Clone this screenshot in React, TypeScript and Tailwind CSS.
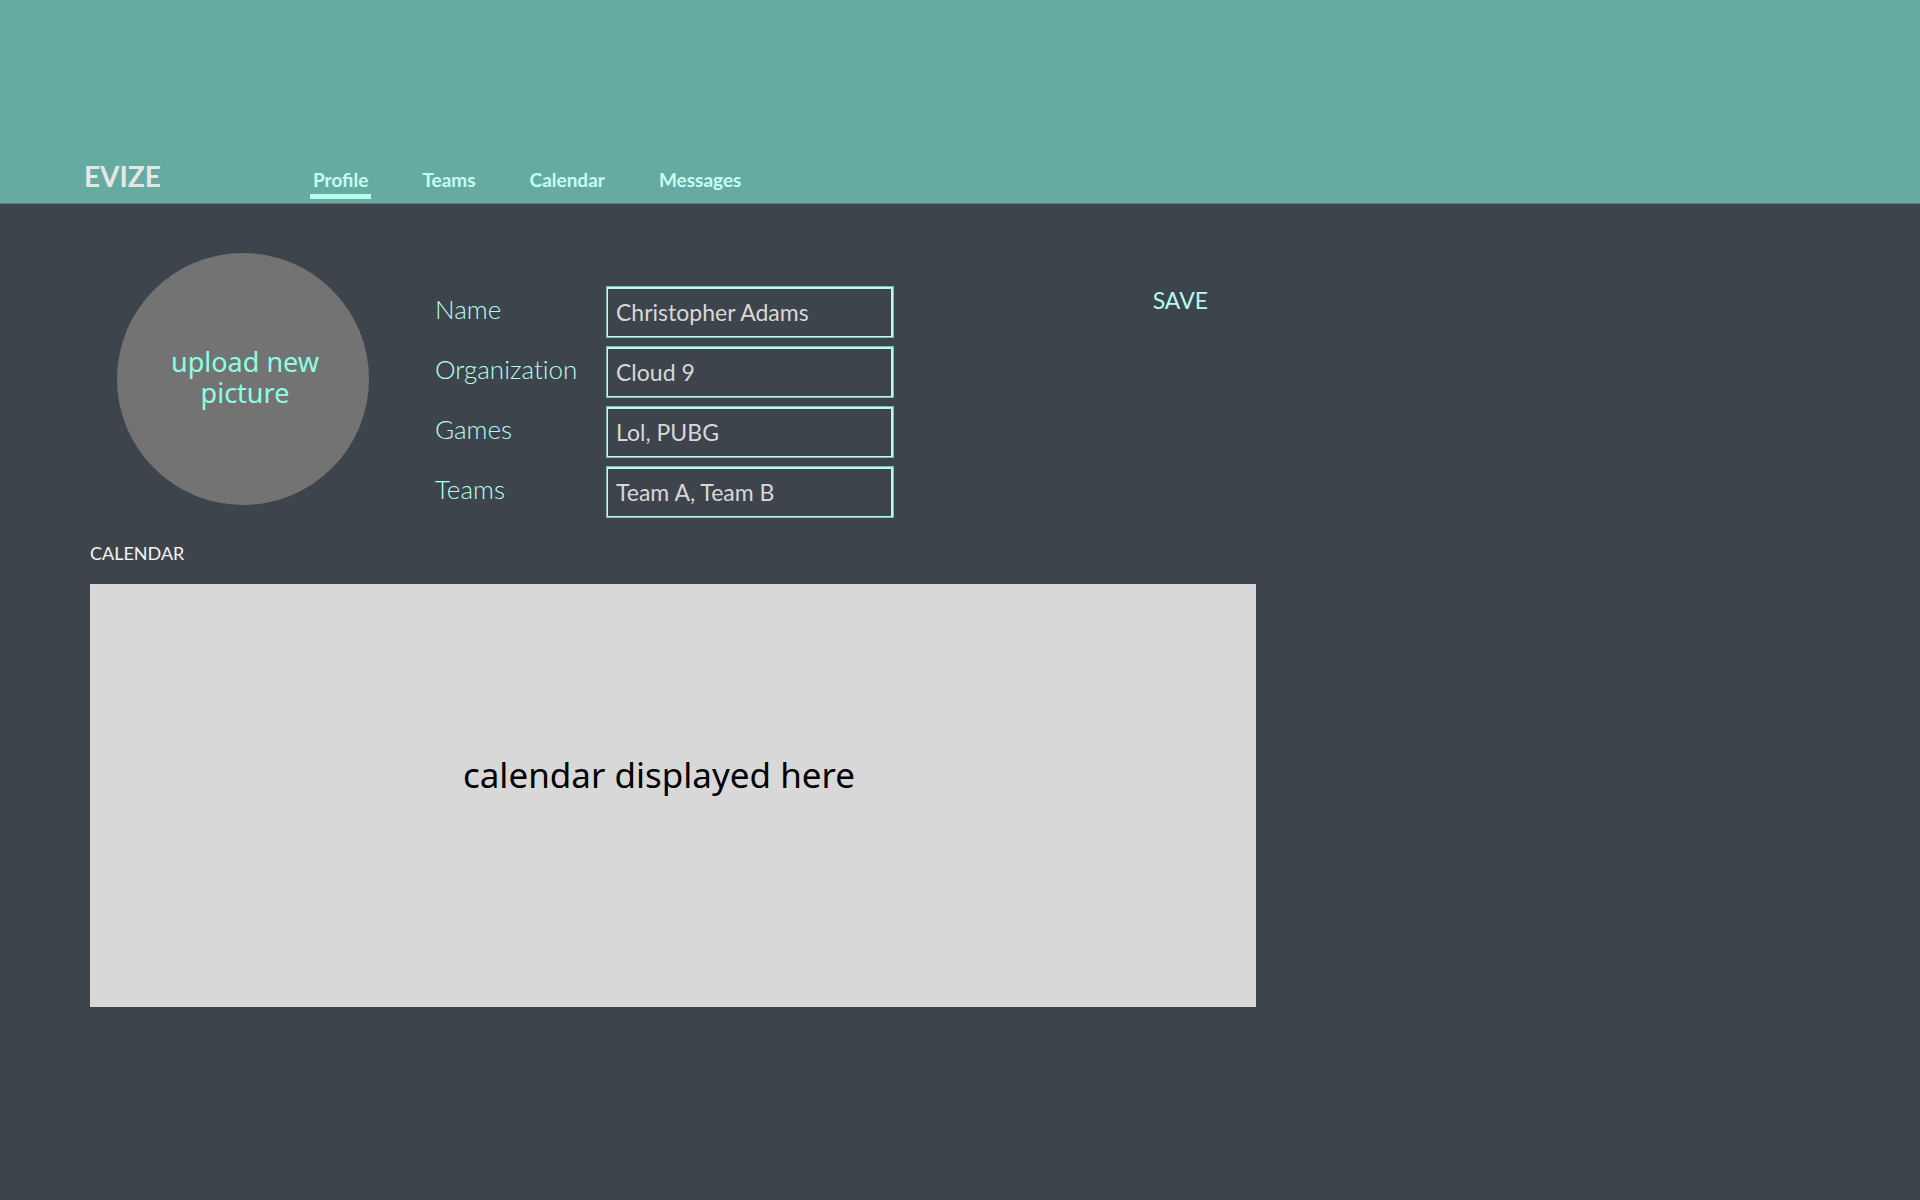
const tabs = ["Profile", "Teams", "Calendar", "Messages"];

const fields = [
  { id: "name", label: "Name", value: "Christopher Adams" },
  { id: "organization", label: "Organization", value: "Cloud 9" },
  { id: "games", label: "Games", value: "Lol, PUBG" },
  { id: "teams", label: "Teams", value: "Team A, Team B" },
];

function Header() {
  return (
    <header className="flex h-[204px] items-end border-b border-[#548079] bg-[#66aba1] pl-[84px]">
      <a href="#home" className="mb-[9px] w-[226px] text-[28px] leading-9 font-bold text-[#e6e6e6]">
        EVIZE
      </a>
      <nav className="flex gap-12">
        {tabs.map((tab, i) => (
          <a
            key={tab}
            href={"#" + tab.toLowerCase()}
            aria-current={i === 0 ? "page" : undefined}
            className="mb-1 border-b-[5px] border-transparent px-[3px] pb-0.5 text-[19px] leading-6 font-bold text-[#c4fff2] aria-[current=page]:border-[#b5ffee]"
          >
            {tab}
          </a>
        ))}
      </nav>
    </header>
  );
}

function Field({ id, label, value }: { id: string; label: string; value: string }) {
  return (
    <div className="flex h-[52px] items-center">
      <label
        htmlFor={id}
        className="w-[171px] pb-1.5 text-[26px] leading-8 font-light text-[#b5ffee] [font-variant-ligatures:none]"
      >
        {label}
      </label>
      <input
        id={id}
        type="text"
        defaultValue={value}
        className="h-full w-[288px] border border-[#82b8af] bg-transparent px-[9px] text-[23px] text-[#d8d8d8] shadow-[inset_0_0_0_1px_#b5ffee,inset_-1px_1px_0_1px_#b5ffee] outline-none"
      />
    </div>
  );
}

export default function App() {
  return (
    <div className="min-h-screen bg-[#3e444c] font-['Lato',sans-serif]">
      <Header />
      <main className="max-w-[1256px] pl-[90px]">
        <section className="flex items-start pt-[49px] pl-[27px]">
          <button
            type="button"
            className="size-[252px] shrink-0 rounded-full bg-[#737373] pr-9 pb-1 pl-10 font-['Noto_Sans',sans-serif] text-[27px] leading-[31px] text-[#8cffe4]"
          >
            upload new picture
          </button>
          <form id="profile" className="mt-[33px] ml-[66px] flex flex-col gap-2">
            {fields.map((field) => (
              <Field key={field.id} {...field} />
            ))}
          </form>
          <button
            type="submit"
            form="profile"
            className="mt-[31px] mr-12 ml-auto text-[23px] leading-8 text-[#b5ffee]"
          >
            SAVE
          </button>
        </section>
        <section className="pt-[23px]">
          <h2 className="text-[18px] leading-6 text-[#f4f4f4]">CALENDAR</h2>
          <div className="mt-[19px] flex h-[423px] items-center justify-center bg-[#d8d8d8] pr-7 pb-10 font-['Noto_Sans',sans-serif] text-[35px] text-black">
            calendar displayed here
          </div>
        </section>
      </main>
    </div>
  );
}
